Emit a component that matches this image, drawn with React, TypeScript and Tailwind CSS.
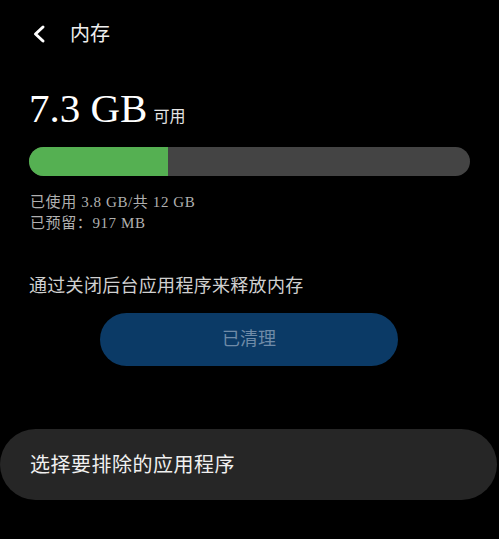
export default function App() {
  const serif = { fontFamily: '"Liberation Serif", "Noto Sans CJK SC", serif' };
  return (
    <div className="w-[499px] h-[539px] bg-black overflow-hidden text-white" style={serif}>
      <div className="flex items-center h-[34px] mt-[17px] pl-[31px]">
        <svg width="16" height="20" viewBox="0 0 16 20" className="text-white">
          <path d="M12 3 L4.5 10 L12 17" fill="none" stroke="currentColor" strokeWidth="3" strokeLinecap="round" strokeLinejoin="round" />
        </svg>
        <span className="ml-[23px] text-[20px] leading-none text-[#eeeeee]">内存</span>
      </div>

      <div className="flex items-baseline pl-[29px] mt-[37px]">
        <span className="text-[41px] leading-none text-white">7.3 GB</span>
        <span className="ml-[6px] text-[16px] leading-none text-[#e5e5e5]">可用</span>
      </div>

      <div className="mx-[29px] mt-[18px] h-[29px] rounded-full bg-[#444444] overflow-hidden flex">
        <div className="h-full w-[139px] bg-[#55b052]" />
      </div>

      <div className="pl-[30px] mt-[16px] text-[15px] leading-[21px] tracking-[0.6px] text-[#b0b0b0]">
        <div>已使用 3.8 GB/共 12 GB</div>
        <div>已预留：917 MB</div>
      </div>

      <div className="pl-[29px] mt-[41px] text-[18px] leading-[22px] tracking-[0.3px] text-[#d0d0d0]">
        通过关闭后台应用程序来释放内存
      </div>

      <div className="flex justify-center mt-[16px] pr-[1px]">
        <div className="w-[298px] h-[53px] rounded-full bg-[#0b3a66] flex items-center justify-center text-[18px] text-[#6f8ba8]">
          已清理
        </div>
      </div>

      <div className="mt-[63px] mr-[2px] h-[71px] rounded-full bg-[#262626] flex items-center pl-[30px] text-[20px] tracking-[0.5px] text-[#f0f0f0]">
        选择要排除的应用程序
      </div>
    </div>
  );
}
